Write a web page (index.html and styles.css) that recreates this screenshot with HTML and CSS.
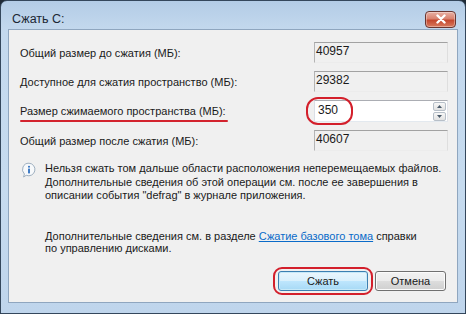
FILE: index.html
```html
<!DOCTYPE html>
<html lang="ru">
<head>
<meta charset="utf-8">
<title>Сжать C:</title>
<link rel="stylesheet" href="styles.css">
</head>
<body>
<div class="window">
  <div class="titlebar">
    <span class="title">Сжать C:</span>
    <button class="close" aria-label="Закрыть">
      <svg width="14" height="10" viewBox="0 0 14 10"><path d="M3.5 1.5 L10.5 8.5 M10.5 1.5 L3.5 8.5" stroke="#fff" stroke-width="2.4" stroke-linecap="round"/></svg>
    </button>
  </div>
  <div class="client">
    <div class="rows">
      <div class="label">Общий размер до сжатия (МБ):</div>
      <div class="field ro">40957</div>
      <div class="label">Доступное для сжатия пространство (МБ):</div>
      <div class="field ro">29382</div>
      <div class="label underlined">Размер сжимаемого пространства (МБ):</div>
      <div class="field edit">
        <span class="val">350</span>
        <span class="spin">
          <span class="sbtn"><svg width="5" height="3" viewBox="0 0 5 3"><path d="M0 3 L2.5 0 L5 3Z" fill="#4a5a6a"/></svg></span>
          <span class="sbtn"><svg width="5" height="3" viewBox="0 0 5 3"><path d="M0 0 L2.5 3 L5 0Z" fill="#4a5a6a"/></svg></span>
        </span>
        <span class="ring ring-val"></span>
      </div>
      <div class="label">Общий размер после сжатия (МБ):</div>
      <div class="field ro">40607</div>
    </div>
    <div class="info">
      <svg class="info-icon" width="16" height="16" viewBox="0 0 16 16">
        <path d="M8 1.2 A6.3 6.3 0 1 1 5.2 13.3 L2.6 15 L3.4 12 A6.3 6.3 0 0 1 8 1.2Z" fill="#f7f9fb" stroke="#9fb0c0" stroke-width="1"/>
        <circle cx="8" cy="4.8" r="1" fill="#2d6fc0"/>
        <rect x="7.1" y="6.6" width="1.8" height="4.8" fill="#2d6fc0"/>
      </svg>
      <p>Нельзя сжать том дальше области расположения неперемещаемых файлов.<br>Дополнительные сведения об этой операции см. после ее завершения в<br>описании события "defrag" в журнале приложения.</p>
    </div>
    <p class="help">Дополнительные сведения см. в разделе <a href="#">Сжатие базового тома</a> справки<br>по управлению дисками.</p>
    <div class="buttons">
      <button class="btn default">Сжать<span class="ring ring-btn"></span></button>
      <button class="btn">Отмена</button>
    </div>
  </div>
</div>
</body>
</html>
```

FILE: styles.css
```css
* { box-sizing: border-box; }
html, body { margin: 0; padding: 0; }
body {
  width: 466px;
  height: 314px;
  overflow: hidden;
  background: #1f2a36;
  font-family: "Liberation Sans", Arial, sans-serif;
  font-size: 11px;
  color: #1a1a1a;
}
.window {
  width: 466px;
  height: 314px;
  border: 1px solid #34475c;
  border-radius: 7px 7px 0 0;
  background: linear-gradient(to bottom, #b3cce6 0px, #c4d9ee 30px, #c6dbef 60%, #bfd5ec 100%);
  display: flex;
  flex-direction: column;
  padding: 0 7px 10px 7px;
}
.titlebar {
  height: 28px;
  display: flex;
  align-items: center;
  justify-content: space-between;
  padding: 0 2px 0 4px;
}
.title {
  font-size: 12.5px;
  color: #1b2735;
  margin-top: 7px;
}
.close {
  width: 31px;
  height: 17px;
  margin-top: 8px;
  border: 1px solid #6a3530;
  border-radius: 4px;
  background: linear-gradient(to bottom, #e8b0a4 0%, #d9826f 45%, #c4482f 55%, #d87a5e 100%);
  box-shadow: inset 0 0 0 1px rgba(255,255,255,0.35);
  display: flex;
  align-items: center;
  justify-content: center;
  padding: 0;
}
.client {
  flex: 1;
  background: #f0f0f0;
  border: 1px solid #8fa6bf;
  padding: 12px 9px 0 11px;
  position: relative;
  display: flex;
  flex-direction: column;
}
.rows {
  display: grid;
  grid-template-columns: 1fr 134px;
  row-gap: 8px;
  align-items: center;
}
.label {
  line-height: 14px;
  position: relative;
}
.underlined::after {
  content: "";
  position: absolute;
  left: 0;
  width: 208px;
  bottom: -4px;
  height: 2px;
  border-radius: 1px;
  background: #d3232e;
}
.field {
  height: 21px;
  position: relative;
  line-height: 14px;
  font-size: 12px;
}
.field.ro {
  background: #f0f0f0;
  border-top: 1px solid #a2a2a2;
  border-left: 1px solid #b4b4b4;
  border-right: 1px solid #dedede;
  border-bottom: 1px solid #ececec;
  padding: 1px 1px;
}
.field.edit {
  height: 22px;
  background: #fff;
  border: 1px solid #abadb3;
  border-left-color: #dbdfe6;
  border-bottom-color: #e3e9ef;
  border-right-color: #e2e3ea;
  display: flex;
  align-items: center;
  justify-content: space-between;
  padding: 0 1px 0 3px;
}
.val { margin-top: -2px; }
.spin {
  display: flex;
  flex-direction: column;
  gap: 1px;
}
.sbtn {
  width: 13px;
  height: 9px;
  border: 1px solid #b7bfc8;
  border-radius: 2px;
  background: linear-gradient(to bottom, #f7f7f7, #e2e2e2);
  display: flex;
  align-items: center;
  justify-content: center;
}
.ring {
  position: absolute;
  border: 2.5px solid #d31f2b;
  pointer-events: none;
}
.ring-val {
  left: -9px;
  top: -4px;
  width: 47px;
  height: 28px;
  border-radius: 12px;
}
.info {
  display: flex;
  gap: 8px;
  margin-top: 11px;
  padding-left: 1px;
}
.info-icon { flex: none; margin-top: 0px; }
.info p, .help {
  margin: 0;
  line-height: 13.5px;
  white-space: nowrap;
}
.help {
  margin-top: 27px;
  margin-left: 25px;
  line-height: 12.5px;
}
.help a { color: #0a6bc9; }
.buttons {
  margin-top: auto;
  margin-bottom: 11px;
  display: flex;
  justify-content: flex-end;
  gap: 7px;
  padding-right: 2px;
}
.btn {
  position: relative;
  height: 20px;
  width: 90px;
  font-family: inherit;
  font-size: 11px;
  color: #1a1a1a;
  border: 1px solid #707070;
  border-radius: 3px;
  background: linear-gradient(to bottom, #f2f2f2 0%, #ebebeb 50%, #dddddd 51%, #cfcfcf 100%);
  box-shadow: inset 0 0 0 1px #fbfbfb;
  padding: 0;
}
.btn + .btn { width: 71px; }
.btn.default {
  border-color: #3c7fb1;
  background: linear-gradient(to bottom, #eaf6fd 0%, #d9f0fc 50%, #bee6fd 51%, #a7d9f5 100%);
  box-shadow: inset 0 0 0 1px #c7e9f8;
}
.ring-btn {
  left: -6px;
  top: -5px;
  width: 100px;
  height: 28px;
  border-radius: 9px;
}
```
